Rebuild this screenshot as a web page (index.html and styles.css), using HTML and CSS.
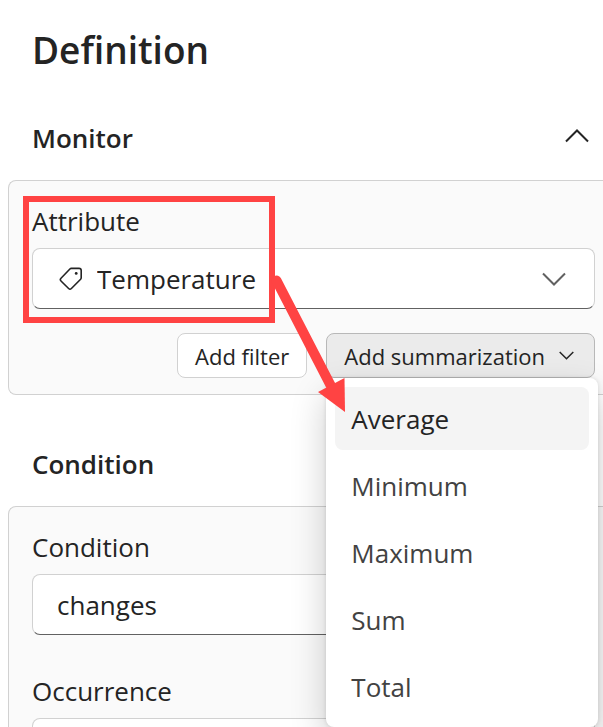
FILE: index.html
```html
<!DOCTYPE html>
<html lang="en">
<head>
<meta charset="utf-8">
<title>Definition</title>
<link rel="stylesheet" href="styles.css">
</head>
<body>
<main class="page">
  <h1 class="title">Definition</h1>

  <section class="section">
    <header class="section-head">
      <h2 class="section-title">Monitor</h2>
      <button class="collapse" type="button" aria-label="Collapse Monitor">
        <svg width="24" height="14" viewBox="0 0 24 14"><path d="M1 12.5 12 1.5 23 12.5"/></svg>
      </button>
    </header>
    <div class="panel">
      <div class="group">
        <label class="label" for="attribute">Attribute</label>
        <div class="field field-icon">
          <svg class="tag" width="24" height="24" viewBox="0 0 24 24"><path d="M12.3 1.4H20Q22.2 1.4 22.2 3.6V10.8Q22.2 11.6 21.6 12.3L12.4 21.5Q11 22.8 9.6 21.5L2 14Q.6 12.6 2 11.2L10.9 2Q11.5 1.4 12.3 1.4Z"/><circle cx="17.2" cy="6.4" r="1.4"/></svg>
          <select class="select" id="attribute"><option>Temperature</option></select>
          <svg class="chevron" width="24" height="14" viewBox="0 0 24 14"><path d="M1 1.5 12 12.5 23 1.5"/></svg>
        </div>
      </div>
      <div class="actions">
        <button class="button" type="button">Add filter</button>
        <div class="dropdown">
          <button class="button button-open" type="button" aria-haspopup="menu" aria-expanded="true">Add summarization
            <svg width="15" height="9" viewBox="0 0 15 9"><path d="M.7 1 7.5 7.8 14.3 1"/></svg>
          </button>
          <div class="menu" role="menu">
            <button class="item item-active" type="button" role="menuitem">Average</button>
            <button class="item" type="button" role="menuitem">Minimum</button>
            <button class="item" type="button" role="menuitem">Maximum</button>
            <button class="item" type="button" role="menuitem">Sum</button>
            <button class="item" type="button" role="menuitem">Total</button>
          </div>
        </div>
      </div>
      <svg class="callout" width="340" height="235" viewBox="0 0 340 235" aria-hidden="true">
        <rect x="17" y="18" width="246" height="121"/>
        <path class="shaft" d="M267.500 99.500 323 207"/>
        <path class="head" d="M309 211 335.500 197 336 231Z"/>
      </svg>
    </div>
  </section>

  <section class="section">
    <header class="section-head">
      <h2 class="section-title">Condition</h2>
    </header>
    <div class="panel">
      <div class="group">
        <label class="label" for="condition">Condition</label>
        <div class="field">
          <select class="select" id="condition"><option>changes</option></select>
        </div>
      </div>
      <div class="group">
        <label class="label" for="occurrence">Occurrence</label>
        <div class="field">
          <select class="select" id="occurrence"></select>
        </div>
      </div>
    </div>
  </section>
</main>
</body>
</html>
```
FILE: styles.css
```css
* { box-sizing: border-box; }

body {
  margin: 0;
  background: #fff;
  color: #242424;
  font-family: "Open Sans", "Noto Sans", sans-serif;
  font-size: 26px;
  line-height: 36px;
}

button, select { font: inherit; color: inherit; }

svg { flex: none; fill: none; stroke: #242424; stroke-width: 2; }

.page {
  height: 100vh;
  overflow: hidden;
  padding: 24px 0 0 8px;
}

.title {
  margin: 0 0 32px;
  padding-left: 24px;
  font-size: 37px;
  font-weight: 600;
  line-height: 52px;
}

.section { margin-bottom: 39px; }

.section-head {
  display: flex;
  align-items: center;
  justify-content: space-between;
  height: 60px;
  margin-bottom: 12px;
  padding: 0 14px 0 24px;
}

.section-title {
  margin: 0;
  font-size: 26px;
  font-weight: 600;
  line-height: 36px;
}

.collapse {
  display: flex;
  padding: 0 0 4px;
  border: 0;
  background: none;
}

.panel {
  position: relative;
  display: flex;
  flex-direction: column;
  gap: 24px;
  padding: 23px 8px 16px 23px;
  border: 1px solid #d1d1d1;
  border-right: 0;
  border-radius: 8px 0 0 8px;
  background: #fafafa;
}

.group + .group { margin-top: 15px; }

.label { display: block; padding-bottom: 2px; margin-bottom: 8px; line-height: 34px; }

.field {
  display: flex;
  align-items: center;
  height: 61px;
  padding: 0 28px 0 24px;
  border: 1px solid #d1d1d1;
  border-bottom-color: #616161;
  border-radius: 8px;
  background: #fff;
}

.field-icon { gap: 14px; padding-left: 26px; }

.select {
  flex: 1;
  min-width: 0;
  padding: 0;
  border: 0;
  appearance: none;
  background: none;
}

.tag { stroke-width: 1.6; }
.tag circle { fill: #242424; stroke: none; }
.chevron { stroke: #616161; }

.actions {
  display: flex;
  justify-content: flex-end;
  gap: 19px;
}

.button {
  display: flex;
  align-items: center;
  gap: 14px;
  height: 45px;
  padding: 0 17px;
  border: 1px solid #d1d1d1;
  border-radius: 8px;
  background: #fff;
  font-size: 22px;
}

.button-open {
  padding: 0 20px 0 17px;
  border-color: #b8b8b8;
  background: #ebebeb;
}

.button-open svg { stroke-width: 1.5; }

.dropdown { position: relative; }

.menu {
  position: absolute;
  z-index: 1;
  top: 100%;
  left: 0;
  right: -3px;
  display: flex;
  flex-direction: column;
  gap: 4px;
  padding: 9px;
  border-radius: 8px;
  background: #fff;
  box-shadow: 0 0 4px rgba(0, 0, 0, .12), 0 16px 36px rgba(0, 0, 0, .2);
}

.item {
  height: 63px;
  padding: 0 16px;
  border: 0;
  border-radius: 8px;
  background: none;
  color: #424242;
  text-align: left;
}

.item-active { background: #f4f4f4; color: #242424; }

.callout {
  position: absolute;
  z-index: 2;
  top: 0;
  left: 0;
  pointer-events: none;
}

.callout rect { stroke: #ff4343; stroke-width: 6; }
.callout .shaft { stroke: #ff4343; stroke-width: 10; stroke-linecap: round; }
.callout .head { fill: #ff4343; stroke: none; }
```
